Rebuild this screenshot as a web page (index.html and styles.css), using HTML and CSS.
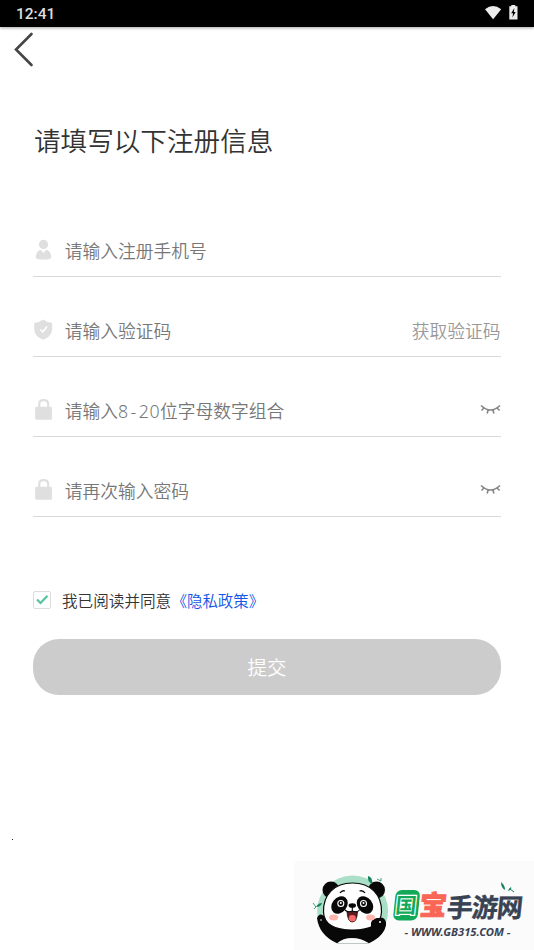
FILE: index.html
```html
<!DOCTYPE html>
<html lang="zh-CN">
  <head>
    <meta charset="utf-8">
    <title>注册</title>
    <link rel="stylesheet" href="styles.css">
  </head>
  <body>
    <div class="status-bar">
      <span class="time">12:41</span>
      <svg class="status-icons" width="36" height="18" viewBox="0 0 36 18">
        <path d="M1 5.2Q9 -1.2 17.2 5.2L9.1 15.2Z" fill="#ececec" />
        <path d="M25.3 2.3H27.3V1H31.3V2.3H33.5V15.6H25.3Z" fill="#ececec" />
        <path d="M30.4 4L27.2 9.3H29.1L28.4 13.4L31.7 8H29.8Z" fill="#000" />
      </svg>
    </div>

    <div class="nav">
      <svg width="20" height="36" viewBox="0 0 20 36">
        <path d="M17.5 3L2 18.5L17.5 34" fill="none" stroke="#454545" stroke-width="2.6" stroke-linecap="round" />
      </svg>
    </div>

    <div class="content">
      <h1>请填写以下注册信息</h1>

      <div class="field">
        <svg class="icon" width="20" height="22" viewBox="0 0 20 22">
          <circle cx="10.5" cy="5.4" r="4.6" fill="#dfdfdf" />
          <path d="M2.8 18.5C2.8 14 5 11.3 7.5 10.8L10.5 14L13.5 10.8C16 11.3 18.2 14 18.2 18.5Q18 20.5 10.5 20.5T2.8 18.5Z" fill="#dfdfdf" />
        </svg>
        <span class="placeholder">请输入注册手机号</span>
      </div>

      <div class="field">
        <svg class="icon" width="20" height="22" viewBox="0 0 20 22">
          <path d="M10.2 .5Q14 3.5 19.2 4V10.5Q18.5 17.5 10.2 20.8Q1.8 17.5 1.2 10.5V4Q6.4 3.5 10.2 .5Z" fill="#dfdfdf" />
          <path d="M7.2 10.5L9.8 12.8L14 7.6" fill="none" stroke="#fff" stroke-width="1.6" />
        </svg>
        <span class="placeholder">请输入验证码</span>
        <span class="get-code">获取验证码</span>
      </div>

      <div class="field">
        <svg class="icon" width="20" height="22" viewBox="0 0 20 22">
          <path d="M6.2 9V5.5Q6.2 1.2 10.7 1.2T15.2 5.5V9" fill="none" stroke="#dfdfdf" stroke-width="2.2" />
          <rect x="2.2" y="7.8" width="16.7" height="13" rx="1" fill="#dfdfdf" />
        </svg>
        <span class="placeholder">请输入<span class="digits">8<i>-</i>20</span>位字母数字组合</span>
        <svg class="eye" width="21" height="12" viewBox="0 0 21 12">
          <path d="M1 1.5Q10.5 10.5 20 1.5M4 4L1.5 6.5M8.1 6L7.2 9.5M13 6L13.9 9.5M17 4L19.6 6.5" fill="none" stroke="#858585" stroke-width="1.6" />
        </svg>
      </div>

      <div class="field">
        <svg class="icon" width="20" height="22" viewBox="0 0 20 22">
          <path d="M6.2 9V5.5Q6.2 1.2 10.7 1.2T15.2 5.5V9" fill="none" stroke="#dfdfdf" stroke-width="2.2" />
          <rect x="2.2" y="7.8" width="16.7" height="13" rx="1" fill="#dfdfdf" />
        </svg>
        <span class="placeholder">请再次输入密码</span>
        <svg class="eye" width="21" height="12" viewBox="0 0 21 12">
          <path d="M1 1.5Q10.5 10.5 20 1.5M4 4L1.5 6.5M8.1 6L7.2 9.5M13 6L13.9 9.5M17 4L19.6 6.5" fill="none" stroke="#858585" stroke-width="1.6" />
        </svg>
      </div>

      <div class="agreement">
        <span class="checkbox">
          <svg width="16" height="16" viewBox="0 0 16 16">
            <path d="M3 7.5L6.5 11L13.5 3.7" fill="none" stroke="#56c3a0" stroke-width="2.2" />
          </svg>
        </span>
        <span class="agree-text">我已阅读并同意</span><a class="policy">《隐私政策》</a>
      </div>

      <button class="submit">提交</button>
    </div>

    <div class="dot"></div>

    <div class="brand">
      <svg width="240" height="89" viewBox="0 0 240 89">
        <!-- panda -->
        <circle cx="58.6" cy="50" r="35.5" fill="#a9dfc6" />
        <rect x="20" y="82.3" width="80" height="7" fill="#fbfbfb" />
        <circle cx="37" cy="29" r="8.5" fill="#080808" />
        <circle cx="82.5" cy="29" r="8.5" fill="#080808" />
        <path d="M23 57Q26 50 32 57L38 65H78Q77 58 83 57Q91 55 92 62Q92 74 75 82.3H43Q25 74 23 57Z" fill="#080808" />
        <path d="M43 82.3Q49 77 58 77T75 82.3Z" fill="#fbfbfb" />
        <path d="M58.5 22C77 22 88 34 87.5 51C87 64 75 69 58.5 69S30 64 29.5 51C29 34 40 22 58.5 22Z" fill="#fff" stroke="#080808" stroke-width="1.2" />
        <path d="M77 65Q76 58 83 57Q92 56 92 64L86 72H77Z" fill="#080808" />
        <circle cx="86" cy="61" r="1" fill="#fff" />
        <circle cx="27" cy="59" r=".8" fill="#fff" />
        <ellipse cx="45.5" cy="44" rx="7.4" ry="9.5" fill="#080808" transform="rotate(38 45.5 44)" />
        <ellipse cx="71" cy="44" rx="7.4" ry="9.5" fill="#080808" transform="rotate(-38 71 44)" />
        <circle cx="46.8" cy="42.5" r="3" fill="#080808" stroke="#fff" stroke-width="1.1" />
        <circle cx="69.5" cy="42.5" r="3" fill="#080808" stroke="#fff" stroke-width="1.1" />
        <circle cx="46.8" cy="42" r="1" fill="#fff" />
        <circle cx="69.5" cy="42" r="1" fill="#fff" />
        <path d="M46 32Q48 29 51 30M65.5 30Q69 29 71 32" fill="none" stroke="#080808" stroke-width="1.3" />
        <ellipse cx="58.3" cy="44.5" rx="3.7" ry="2.3" fill="#080808" />
        <path d="M58.3 46V50M51 49Q54 52 58.3 50Q63 52 65.5 49" fill="none" stroke="#080808" stroke-width="1.1" />
        <path d="M53 51Q58 50 63.5 51Q63 61 58.3 61T53 51Z" fill="#601b20" stroke="#080808" stroke-width=".7" />
        <ellipse cx="58.3" cy="57.3" rx="3.5" ry="3.2" fill="#fb6868" />
        <ellipse cx="39.7" cy="56.5" rx="4.5" ry="3" fill="#ffb4ac" />
        <ellipse cx="76.5" cy="56.5" rx="4.5" ry="3" fill="#ffb4ac" />
        <path d="M74 15Q79 16 78 23Q73 20 74 15M22 46Q24 42 28 42Q27 46 22 46" fill="#14835b" />
        <path d="M19 42L22 46L20 48M83 18L87 20V17" fill="none" stroke="#14835b" stroke-width=".8" />

        <!-- site name -->
        <g class="brand-name" transform="translate(5.5 0) skewX(-6)">
          <rect x="99.5" y="29" width="24.5" height="30.5" rx="6" fill="#12aa59" />
          <text class="brand-green" x="100.7" y="52.5">国</text>
          <text class="brand-red" x="125" y="54">宝</text>
          <text class="brand-dark" x="152.5" y="56" textLength="76">手游网</text>
        </g>
        <text class="brand-url" x="110.5" y="74.5" textLength="106" lengthAdjust="spacingAndGlyphs">- WWW.GB315.COM -</text>
        <path d="M207 21Q211 24 211 29Q207 27 207 21M214 30Q215 27 217 26Q218 29 214 30" fill="#14835b" />
        <path d="M216 28L220 31" stroke="#14835b" />
      </svg>
    </div>
  </body>
</html>
```
FILE: styles.css
```css
* {
  box-sizing: border-box;
}

body {
  margin: 0;
  height: 950px;
  overflow: hidden;
  display: flex;
  flex-direction: column;
  background: #fff;
  color: #333;
  font-family: 'Noto Sans CJK SC', sans-serif;
  font-weight: 350;
}

.status-bar {
  flex: none;
  display: flex;
  align-items: center;
  justify-content: space-between;
  height: 27px;
  padding: 0 14px 0 16px;
  background: #000;
  box-shadow: 0 1px 3px rgba(0, 0, 0, 0.35);
}

.time {
  color: #ddd;
  font: 500 15.5px/27px Roboto, sans-serif;
  padding-top: 1px;
}

.status-icons {
  margin-bottom: 1px;
}

.nav {
  height: 45px;
  padding: 4px 14px 0;
}

.nav svg {
  display: block;
}

.content {
  padding: 48px 33px 0;
}

h1 {
  margin: 0 0 37px;
  padding-left: 1px;
  font-size: 26.6px;
  font-weight: 350;
  line-height: 40px;
}

.field {
  display: flex;
  align-items: center;
  height: 80px;
  padding-top: 26px;
  border-bottom: 1px solid #d8d8da;
  font-size: 17.75px;
}

.icon {
  margin-right: 11.7px;
}

.placeholder {
  color: #777;
}

.digits {
  font-family: 'Noto Sans', sans-serif;
  letter-spacing: 0.5px;
}

.digits i {
  padding: 0 2px;
  font-style: normal;
}

.get-code {
  margin-left: auto;
  margin-right: 0.5px;
  color: #999;
}

.eye {
  margin-left: auto;
}

.agreement {
  display: flex;
  align-items: center;
  height: 24px;
  margin-top: 71px;
  font-size: 15.6px;
}

.checkbox {
  width: 18px;
  height: 18px;
  margin-right: 11px;
  border: 1px solid #ddd;
  border-radius: 2px;
}

.checkbox svg {
  display: block;
}

.policy {
  margin-left: 0.5px;
  color: #1355e5;
  font-size: 15.4px;
  text-spacing-trim: space-all;
}

.submit {
  display: block;
  width: 100%;
  height: 56px;
  margin-top: 27px;
  padding: 0 0 2px;
  border: none;
  border-radius: 26px;
  background: #ccc;
  color: #fff;
  font: 350 19.5px 'Noto Sans CJK SC', sans-serif;
}

.dot {
  width: 1px;
  height: 1px;
  margin: 144px 0 0 12px;
  background: #222;
}

.brand {
  width: 240px;
  height: 89px;
  margin: auto 0 0 auto;
  border-top-left-radius: 4px;
  background: #fbfbfb;
}

.brand svg {
  display: block;
}

.brand-name {
  font-weight: 900;
  font-size: 26px;
}

.brand-green {
  fill: #12aa59;
  stroke: #fff;
  stroke-width: 2.4px;
  paint-order: stroke;
  font-size: 21px;
  font-weight: 700;
}

.brand-red {
  fill: #fa6655;
  stroke: #fa6655;
  font-size: 27px;
}

.brand-dark {
  fill: #394252;
  font-weight: 700;
  stroke: #394252;
  stroke-width: 0.4px;
}

.brand-url {
  fill: #394252;
  font: italic 700 10.8px 'Noto Sans', sans-serif;
}
```
